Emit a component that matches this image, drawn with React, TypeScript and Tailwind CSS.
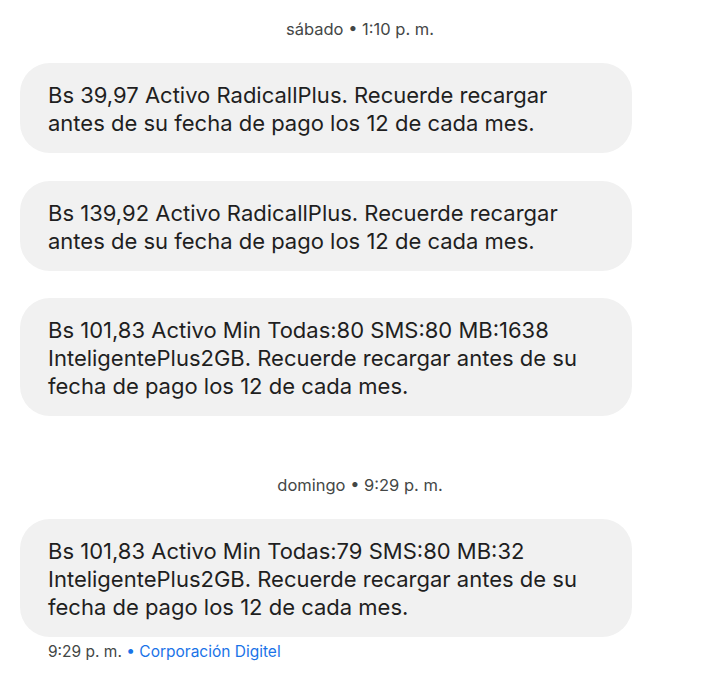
const font = { fontFamily: "Inter, Roboto, 'Noto Sans', sans-serif" };

function DayHeader({ label, className }: { label: string; className?: string }) {
  return (
    <div className={`h-[22px] text-center text-[16.5px] leading-[22px] text-[#444746] ${className ?? ""}`}>
      {label}
    </div>
  );
}

function Bubble({ lines, className }: { lines: string[]; className?: string }) {
  return (
    <div
      className={`ml-[20px] w-[612px] rounded-[30px] bg-[#f1f1f1] pl-[28px] pr-[20px] pt-[18px] pb-[16px] text-[22px] leading-[28px] text-[#1f1f1f] ${className ?? ""}`}
    >
      {lines.map((l) => (
        <div key={l} className="whitespace-nowrap">
          {l}
        </div>
      ))}
    </div>
  );
}

export default function App() {
  return (
    <div className="min-h-screen w-[720px] bg-white pt-[18px]" style={font}>
      <DayHeader label="sábado • 1:10 p. m." />
      <Bubble
        className="mt-[23px]"
        lines={["Bs 39,97 Activo RadicallPlus. Recuerde recargar", "antes de su fecha de pago los 12 de cada mes."]}
      />
      <Bubble
        className="mt-[28px]"
        lines={["Bs 139,92 Activo RadicallPlus. Recuerde recargar", "antes de su fecha de pago los 12 de cada mes."]}
      />
      <Bubble
        className="mt-[27px]"
        lines={[
          "Bs 101,83 Activo Min Todas:80 SMS:80 MB:1638",
          "InteligentePlus2GB. Recuerde recargar antes de su",
          "fecha de pago los 12 de cada mes.",
        ]}
      />
      <DayHeader label="domingo • 9:29 p. m." className="mt-[58px]" />
      <Bubble
        className="mt-[23px]"
        lines={[
          "Bs 101,83 Activo Min Todas:79 SMS:80 MB:32",
          "InteligentePlus2GB. Recuerde recargar antes de su",
          "fecha de pago los 12 de cada mes.",
        ]}
      />
      <div className="ml-[48px] mt-[4px] text-[15.5px] leading-[22px] text-[#444746]">
        9:29 p. m. <span className="text-[#1a73e8]">• Corporación Digitel</span>
      </div>
    </div>
  );
}
